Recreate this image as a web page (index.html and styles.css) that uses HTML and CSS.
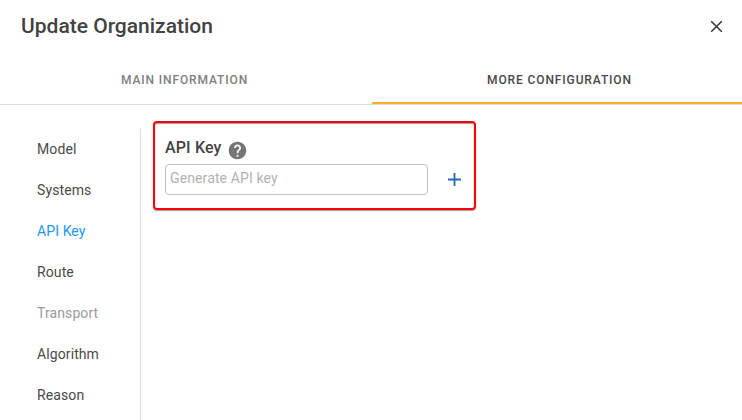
FILE: index.html
```html
<!DOCTYPE html>
<html lang="en">
<head>
<meta charset="utf-8">
<title>Update Organization</title>
<link rel="stylesheet" href="styles.css">
</head>
<body>
<div class="dialog">
  <header class="header">
    <h1 class="title">Update Organization</h1>
    <button class="close" aria-label="Close">
      <svg width="13" height="13" viewBox="0 0 13 13"><path d="M1.200 1.200l10.600 10.600M11.800 1.200L1.200 11.800"/></svg>
    </button>
  </header>
  <nav class="tabs">
    <a class="tab">MAIN INFORMATION</a>
    <a class="tab active">MORE CONFIGURATION</a>
  </nav>
  <div class="body">
    <ul class="menu">
      <li>Model</li>
      <li>Systems</li>
      <li class="selected">API Key</li>
      <li>Route</li>
      <li class="disabled">Transport</li>
      <li>Algorithm</li>
      <li>Reason</li>
    </ul>
    <main class="content">
      <section class="key-box">
        <div class="label-row">
          <label class="label" for="key">API Key</label>
          <svg class="help" width="21" height="21" viewBox="0 0 24 24"><path d="M12 2C6.480 2 2 6.480 2 12s4.480 10 10 10 10-4.480 10-10S17.520 2 12 2zm1 17h-2v-2h2v2zm2.070-7.750l-.9.920C13.450 12.900 13 13.500 13 15h-2v-.5c0-1.100.450-2.100 1.170-2.830l1.240-1.260c.370-.360.590-.860.590-1.410 0-1.100-.9-2-2-2s-2 .9-2 2H8c0-2.210 1.790-4 4-4s4 1.790 4 4c0 .880-.360 1.680-.930 2.250z"/></svg>
        </div>
        <div class="input-row">
          <input id="key" class="input" placeholder="Generate API key">
          <button class="add" aria-label="Add">
            <svg width="13" height="13" viewBox="0 0 13 13"><path d="M6.500 0v13M0 6.500h13"/></svg>
          </button>
        </div>
      </section>
    </main>
  </div>
</div>
</body>
</html>
```
FILE: styles.css
```css
* { box-sizing: border-box; }
body { margin: 0; background: #fff; color: #424242; font-family: Roboto, sans-serif; overflow: hidden; }
button { border: 0; padding: 0; background: none; display: flex; }
.dialog { height: 420px; display: flex; flex-direction: column; overflow: hidden; }
.header { height: 55px; flex: none; display: flex; align-items: center; justify-content: space-between; padding: 0 19px 3px 21px; }
.title { margin: 0; font-size: 21px; line-height: 24px; font-weight: 500; }
.close { margin-top: 1px; }
.close svg { fill: none; stroke: #333; stroke-width: 1.5; }
.tabs { height: 50px; flex: none; display: grid; grid-template-columns: 372px 370px; border-bottom: 1px solid #ddd; }
.tab { display: flex; align-items: center; justify-content: center; padding-right: 3px; font-size: 12px; font-weight: 500; letter-spacing: 0.88px; color: #808080; }
.tab.active { color: #484848; border-bottom: 2px solid #ffae2b; padding: 2px 0 0 5px; }
.body { flex: 1; display: flex; padding-top: 24px; }
.menu { list-style: none; margin: 0; padding: 0 0 0 37px; width: 141px; border-right: 1px solid #ddd; color: #4a4a4a; font-size: 14px; letter-spacing: 0.1px; }
.menu li { height: 41px; line-height: 41px; }
.menu .selected { color: #2196f3; }
.menu .disabled { color: #979c9f; }
.content { padding: 0 0 0 12px; margin-top: -8px; }
.key-box { width: 323px; height: 89px; border: 2px solid #f00; border-radius: 4px; padding: 15px 10px 0; box-shadow: 0 1px 1px rgba(0,0,0,.4), inset 0 1px 1px rgba(0,0,0,.4); }
.label-row { display: flex; height: 26px; gap: 5px; }
.label { font-size: 16px; line-height: 20px; font-weight: 500; letter-spacing: 0.15px; }
.help { margin-top: 2px; fill: #757575; }
.input-row { display: flex; align-items: center; gap: 20px; }
.input { width: 263px; height: 31px; border: 1px solid #c0c0c0; border-radius: 4px; padding: 0 4px 3px; font: 14px Roboto, sans-serif; letter-spacing: 0.12px; }
.input::placeholder { color: #b2b2b2; opacity: 1; }
.add svg { fill: none; stroke: #2368b2; stroke-width: 1.8; }
```
